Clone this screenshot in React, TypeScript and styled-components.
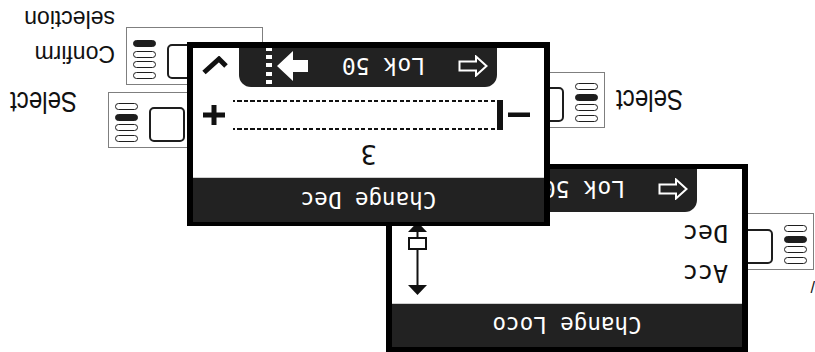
import styled, { createGlobalStyle } from "styled-components";

// The whole sheet is shown upside down: it is laid out upright and the stage is turned.

const GlobalStyle = createGlobalStyle`
  html, body {
    margin: 0;
    padding: 0;
    background: #fff;
  }
  body {
    width: 815px;
    height: 352px;
    overflow: hidden;
  }
`;

const LCD_FONT = `"DejaVu Sans Mono", "Liberation Mono", monospace`;

const Stage = styled.div`
  position: relative;
  width: 815px;
  height: 352px;
  overflow: hidden;
  background: #fff;
  transform: rotate(180deg);
`;

// ── Device (button panel) ────────────────────────────────────────────────────

const Device = styled.div<{ $x: number; $y: number; $h: number; $flip?: boolean }>`
  position: absolute;
  left: ${({ $x }) => $x}px;
  top: ${({ $y }) => $y}px;
  width: 137px;
  height: ${({ $h }) => $h}px;
  box-sizing: border-box;
  border: 1px solid #7f7f7f;
  background: #fff;
  display: flex;
  flex-direction: ${({ $flip }) => ($flip ? "row-reverse" : "row")};
  align-items: flex-start;
  gap: 11px;
  padding: 5px 6px;
  z-index: 1;
`;

const OvalStack = styled.div`
  display: flex;
  flex-direction: column;
  gap: 3.7px;
`;

const Oval = styled.div<{ $on?: boolean }>`
  width: 23px;
  height: 7px;
  box-sizing: border-box;
  border: 1.5px solid #1e1e1e;
  border-radius: 4px;
  background: ${({ $on }) => ($on ? "#1e1e1e" : "#fff")};
`;

const Key = styled.div`
  width: 36px;
  height: 35px;
  box-sizing: border-box;
  border: 2.5px solid #1e1e1e;
  border-radius: 5px;
`;

const Label = styled.div<{ $x: number; $y: number; $size?: number; $narrow?: boolean }>`
  position: absolute;
  left: ${({ $x }) => $x}px;
  top: ${({ $y }) => $y}px;
  font-family: "Liberation Sans", Arial, sans-serif;
  font-size: ${({ $size }) => $size ?? 23}px;
  line-height: 35px;
  color: #111;
  white-space: nowrap;
  z-index: 1;
  transform: ${({ $narrow }) => ($narrow ? "scaleX(0.83)" : "none")};
  transform-origin: left center;
`;

// ── LCD screens ──────────────────────────────────────────────────────────────

const Screen = styled.div<{
  $x: number;
  $y: number;
  $w: number;
  $h: number;
  $bt: number;
  $bb: number;
  $z: number;
}>`
  position: absolute;
  left: ${({ $x }) => $x}px;
  top: ${({ $y }) => $y}px;
  width: ${({ $w }) => $w}px;
  height: ${({ $h }) => $h}px;
  box-sizing: border-box;
  border: 6px solid #000;
  border-top-width: ${({ $bt }) => $bt}px;
  border-bottom-width: ${({ $bb }) => $bb}px;
  background: #fff;
  display: flex;
  flex-direction: column;
  z-index: ${({ $z }) => $z};
  font-family: ${LCD_FONT};
`;

const TitleBar = styled.div<{ $h: number }>`
  height: ${({ $h }) => $h}px;
  flex: none;
  background: #222;
  border-bottom: 1px solid #cfcfcf;
  box-sizing: border-box;
  color: #fff;
  font-size: 22.5px;
  line-height: ${({ $h }) => $h}px;
  text-align: center;
  white-space: nowrap;
`;

const FrontBody = styled.div`
  flex: 1;
  display: flex;
  flex-direction: column;
  padding-top: 9px;
`;

const ValueText = styled.div`
  height: 27px;
  font-size: 27px;
  line-height: 27px;
  text-align: center;
  color: #111;
`;

const SliderRow = styled.div`
  margin-top: 11px;
  height: 30px;
  display: flex;
  align-items: center;
  padding-left: 14px;
`;

const Marker = styled.div`
  width: 6px;
  height: 30px;
  background: #111;
  margin-left: 5px;
`;

const Track = styled.div`
  width: 262px;
  height: 30px;
  margin: 0 8px 0 2px;
  box-sizing: border-box;
  background:
    repeating-linear-gradient(90deg, #111 0 4px, transparent 4px 6.5px) top / 100% 2px no-repeat,
    repeating-linear-gradient(90deg, #111 0 4px, transparent 4px 6.5px) bottom / 100% 2px no-repeat;
`;

const TabRow = styled.div<{ $lead: number }>`
  margin-top: auto;
  display: grid;
  grid-template-columns: ${({ $lead }) => $lead}px 258px 1fr;
`;

const Tab = styled.div<{ $h: number }>`
  grid-column: 2;
  height: ${({ $h }) => $h}px;
  background: #222;
  border-radius: 12px 12px 0 0;
  display: flex;
  align-items: center;
  padding: 3px 0 0 9px;
  box-sizing: border-box;
  color: #fff;
`;

const TabText = styled.span`
  width: 83px;
  margin: 0 34px 0 33px;
  font-size: 23px;
  line-height: 23px;
  white-space: nowrap;
`;

const Dots = styled.div`
  align-self: stretch;
  width: 6px;
  margin: -3px 0 0 5px;
  background: repeating-linear-gradient(180deg, transparent 0 3px, #fff 3px 7px, transparent 7px 8.3px);
`;

const CheckCell = styled.div`
  padding: 12px 0 0 11px;
`;

const BackBody = styled.div`
  flex: 1;
  display: flex;
  flex-direction: column;
`;

const ListArea = styled.div`
  flex: 1;
  display: flex;
  padding: 10px 15px 0 14px;
`;

const List = styled.div`
  flex: 1;
`;

const ListItem = styled.div`
  height: 40px;
  font-size: 25px;
  line-height: 40px;
  color: #111;
`;

const ScrollIcon = styled.svg`
  margin-top: -2px;
  flex: none;
`;

// ── Icons ────────────────────────────────────────────────────────────────────

function OutlineLeftArrow() {
  return (
    <svg width="30" height="22" viewBox="0 0 30 22">
      <path
        d="M1.5 11 L12 1.5 V6.5 H28.5 V15.5 H12 V20.5 Z"
        fill="none"
        stroke="#fff"
        strokeWidth="2"
        strokeLinejoin="miter"
      />
    </svg>
  );
}

function SolidRightArrow() {
  return (
    <svg width="31" height="30" viewBox="0 0 31 30">
      <path d="M0 9 H15 V0 L31 15 L15 30 V21 H0 Z" fill="#fff" />
    </svg>
  );
}

function CheckMark() {
  return (
    <svg width="26" height="19" viewBox="0 0 26 19">
      <path d="M2 9 L9 16 L24 2.5" fill="none" stroke="#111" strokeWidth="5" />
    </svg>
  );
}

function MinusIcon() {
  return (
    <svg width="22" height="5" viewBox="0 0 22 5">
      <rect x="0" y="0" width="22" height="4.5" fill="#111" />
    </svg>
  );
}

function PlusIcon() {
  return (
    <svg width="22" height="20" viewBox="0 0 22 20">
      <rect x="0" y="7.5" width="22" height="5" fill="#111" />
      <rect x="8.5" y="0" width="5" height="20" fill="#111" />
    </svg>
  );
}

function ScrollBar() {
  return (
    <ScrollIcon width="21" height="74" viewBox="0 0 21 74">
      <path d="M10.5 0 L20 10 H1 Z" fill="#111" />
      <line x1="10.5" y1="10" x2="10.5" y2="45" stroke="#111" strokeWidth="2" />
      <rect x="2" y="46" width="17" height="11" fill="#fff" stroke="#111" strokeWidth="2" />
      <line x1="10.5" y1="58" x2="10.5" y2="63" stroke="#111" strokeWidth="2" />
      <path d="M1 63 H20 L10.5 73 Z" fill="#111" />
    </ScrollIcon>
  );
}

// ── Parts ────────────────────────────────────────────────────────────────────

function Buttons({ x, y, h, lit, flip }: { x: number; y: number; h: number; lit: number; flip?: boolean }) {
  return (
    <Device $x={x} $y={y} $h={h} $flip={flip}>
      <OvalStack>
        {[0, 1, 2, 3].map((i) => (
          <Oval key={i} $on={i === lit} />
        ))}
      </OvalStack>
      <Key />
    </Device>
  );
}

function LokTab({ h }: { h: number }) {
  return (
    <Tab $h={h}>
      <OutlineLeftArrow />
      <TabText>Lok 50</TabText>
      <SolidRightArrow />
      <Dots />
    </Tab>
  );
}

export default function App() {
  return (
    <>
      <GlobalStyle />
      <Stage>
        <Buttons x={1} y={82} h={57} lit={2} />
        <Buttons x={210} y={224} h={56} lit={2} />
        <Buttons x={570} y={204} h={56} lit={2} flip />
        <Buttons x={552} y={267} h={58} lit={3} flip />

        <Label $x={0} $y={48} $size={16}>/</Label>
        <Label $x={132} $y={235} $size={29} $narrow>Select</Label>
        <Label $x={738} $y={233} $size={29} $narrow>Select</Label>
        <Label $x={700} $y={281}>
          Confirm
          <br />
          selection
        </Label>

        <Screen $x={67} $y={0} $w={362} $h={188} $bt={5} $bb={5} $z={2}>
          <TitleBar $h={44}>Change Loco</TitleBar>
          <BackBody>
            <ListArea>
              <List>
                <ListItem>Acc</ListItem>
                <ListItem>Dec</ListItem>
              </List>
              <ScrollBar />
            </ListArea>
            <TabRow $lead={45}>
              <LokTab h={43} />
            </TabRow>
          </BackBody>
        </Screen>

        <Screen $x={265} $y={126} $w={363} $h={184} $bt={4} $bb={6} $z={3}>
          <TitleBar $h={45}>Change Dec</TitleBar>
          <FrontBody>
            <ValueText>3</ValueText>
            <SliderRow>
              <MinusIcon />
              <Marker />
              <Track />
              <PlusIcon />
            </SliderRow>
            <TabRow $lead={47}>
              <LokTab h={39} />
              <CheckCell>
                <CheckMark />
              </CheckCell>
            </TabRow>
          </FrontBody>
        </Screen>
      </Stage>
    </>
  );
}
